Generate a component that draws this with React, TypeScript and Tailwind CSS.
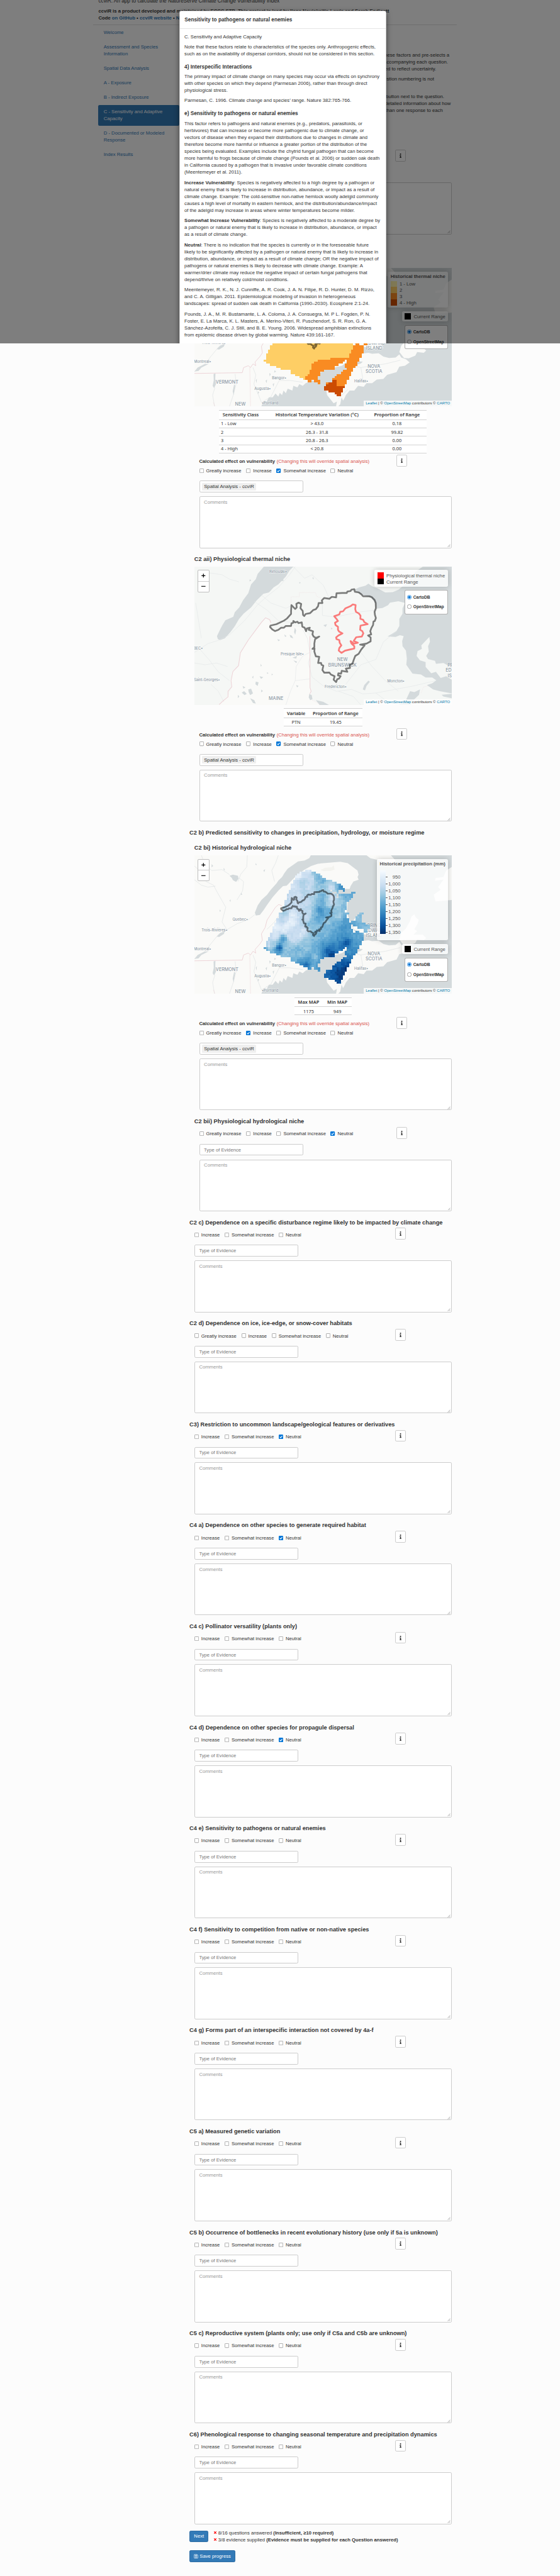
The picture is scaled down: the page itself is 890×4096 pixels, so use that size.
import type { ReactNode } from "react";
import { FaInfo, FaRegSave, FaTimes } from "react-icons/fa";

/* ---------- geometry helpers ---------- */

type Pt = [number, number];

function inside(x: number, y: number, poly: Pt[]): boolean {
  let hit = false;
  for (let i = 0, j = poly.length - 1; i < poly.length; j = i++) {
    const [xi, yi] = poly[i];
    const [xj, yj] = poly[j];
    if (yi > y !== yj > y && x < ((xj - xi) * (y - yi)) / (yj - yi) + xi) hit = !hit;
  }
  return hit;
}

function parse(s: string): Pt[] {
  return s.trim().split(/\s+/).map((p) => p.split(",").map(Number) as Pt);
}

function noise(a: number, b: number): number {
  const n = Math.sin(a * 12.9898 + b * 78.233) * 43758.5453;
  return n - Math.floor(n);
}

/* ---------- raster layers ---------- */

const GRID = parse(
  "360,42 413,42 413,60 450,60 450,78 485,78 485,96 519,96 519,113 555,113 555,131 608,131 608,149 645,149 645,167 680,167 680,184 697,184 697,202 714,202 714,237 732,237 732,255 770,255 770,237 803,237 803,255 785,255 785,290 767,290 767,308 750,308 750,325 732,325 732,400 714,400 714,413 750,413 750,430 732,430 732,465 750,465 750,500 767,500 767,553 785,553 785,590 803,590 803,570 840,570 840,590 873,590 873,660 855,660 855,695 838,695 838,730 820,730 820,765 803,765 803,783 785,783 785,817 767,817 767,853 750,853 750,888 732,888 732,925 714,925 714,960 697,960 697,995 678,995 678,1031 645,1031 645,1013 610,1013 610,995 573,995 573,978 537,978 537,960 520,960 520,942 555,942 555,908 592,908 592,872 627,872 627,853 645,853 645,836 680,836 680,820 697,820 697,802 732,802 732,783 714,783 714,750 732,750 732,715 714,715 714,730 697,730 697,748 660,748 660,765 627,765 627,783 610,783 610,802 537,802 537,820 485,820 485,853 470,853 470,888 500,888 500,908 485,908 485,925 468,925 468,908 432,908 432,888 413,888 413,908 378,908 378,888 343,888 343,872 308,872 308,853 273,853 273,836 237,836 237,802 150,802 150,783 114,783 114,765 60,765 60,748 24,748 24,730 6,730 6,713 24,713 24,660 42,660 42,625 60,625 60,590 78,590 78,536 96,536 96,500 114,500 114,465 132,465 132,413 168,413 168,365 183,365 183,308 200,308 200,255 219,255 219,220 237,220 237,167 255,167 255,131 273,131 273,96 291,96 291,78 308,78 308,60 360,60",
);
const ISLAND = parse(
  "838,413 873,413 873,430 855,430 855,500 891,500 891,517 927,517 927,553 909,553 909,590 873,590 873,553 820,553 820,535 785,535 785,517 767,517 767,487 803,487 803,450 820,450 820,430 838,430",
);
const HOLES: [number, number, number, number][] = [
  [573, 219, 608, 237], [608, 237, 645, 255], [627, 255, 660, 290], [660, 220, 697, 255], [697, 237, 732, 257],
];
const WARM = parse("985,560 965,584 942,622 930,649 850,649 770,660 745,676 735,714 720,731 700,760 700,900 1100,900 1100,560");
const HOT = parse("845,769 865,769 875,796 920,806 897,865 790,865 790,800 830,785");

const CELL_W = 18;
const CELL_H = 17.66;

const RAIN: [number, number, number][] = [
  [390, 50, 0.12], [310, 90, 0.04], [335, 140, 0.33], [260, 190, 0.18], [300, 250, 0.22], [360, 100, 0.24], [420, 120, 0.2],
  [400, 200, 0.24], [440, 80, 0.42], [460, 110, 0.48], [515, 145, 0.5], [540, 180, 0.38], [480, 190, 0.4], [590, 200, 0.2],
  [590, 160, 0.32], [640, 170, 0.45], [680, 185, 0.68], [700, 215, 0.62], [420, 240, 0.3], [350, 230, 0.32], [220, 320, 0.26],
  [280, 330, 0.22], [380, 330, 0.24], [520, 280, 0.5], [515, 330, 0.52], [490, 395, 0.64], [510, 430, 0.58], [470, 470, 0.56],
  [560, 400, 0.5], [450, 420, 0.45], [400, 400, 0.26], [380, 460, 0.24], [430, 500, 0.42], [400, 520, 0.44], [460, 550, 0.42],
  [590, 330, 0.24], [600, 290, 0.2], [560, 320, 0.36], [650, 330, 0.36], [700, 380, 0.44], [740, 290, 0.5], [650, 450, 0.36],
  [560, 500, 0.4], [620, 520, 0.5], [720, 490, 0.58], [700, 560, 0.64], [640, 580, 0.56], [560, 560, 0.46], [540, 610, 0.46],
  [190, 420, 0.36], [160, 480, 0.3], [250, 440, 0.12], [250, 500, 0.06], [200, 540, 0.1], [110, 540, 0.08], [180, 570, 0.12],
  [300, 560, 0.26], [100, 620, 0.14], [50, 700, 0.22], [15, 720, 0.58], [140, 722, 0.84], [120, 745, 0.62], [90, 755, 0.46],
  [175, 640, 0.6], [90, 690, 0.36], [60, 660, 0.28], [230, 620, 0.22], [320, 610, 0.18], [270, 650, 0.24], [350, 570, 0.16],
  [370, 660, 0.38], [200, 720, 0.38], [300, 740, 0.48], [250, 770, 0.42], [330, 780, 0.42], [180, 790, 0.38], [370, 720, 0.4],
  [380, 870, 0.76], [350, 880, 0.72], [400, 820, 0.58], [320, 850, 0.62], [270, 810, 0.46], [450, 800, 0.4], [430, 880, 0.5],
  [480, 900, 0.6], [470, 740, 0.5], [520, 710, 0.62], [560, 750, 0.82], [590, 780, 0.95], [520, 780, 0.66], [600, 720, 0.76],
  [640, 690, 0.66], [720, 675, 0.84], [690, 700, 0.8], [600, 650, 0.56], [450, 640, 0.44], [680, 640, 0.64], [780, 600, 0.55],
  [820, 640, 0.54], [800, 700, 0.6], [740, 750, 0.62], [800, 745, 0.68], [740, 810, 0.72], [680, 860, 0.84], [740, 860, 0.88],
  [720, 910, 1], [650, 930, 0.95], [680, 970, 0.96], [600, 940, 0.86], [570, 930, 0.78], [540, 965, 0.78], [660, 1020, 0.9],
  [610, 900, 0.84], [840, 450, 0.42], [860, 530, 0.46], [900, 560, 0.44], [750, 570, 0.58],
];

const BLUES = [
  [247, 251, 255], [222, 235, 247], [198, 219, 239], [158, 202, 225], [107, 174, 214], [66, 146, 198], [33, 113, 181], [8, 81, 156], [8, 48, 107],
];

function blue(v: number): string {
  const t = Math.min(0.999, Math.max(0, v)) * 8;
  const i = Math.floor(t);
  const f = t - i;
  const c = BLUES[i].map((a, k) => Math.round(a + (BLUES[i + 1][k] - a) * f));
  return `rgb(${c[0]},${c[1]},${c[2]})`;
}

function rain(x: number, y: number): number {
  let sum = 0;
  let weight = 0;
  for (const [px, py, v] of RAIN) {
    const d = (x - px) ** 2 + (y - py) ** 2 + 150;
    const w = 1 / (d * Math.sqrt(d));
    sum += w * v;
    weight += w;
  }
  return sum / weight;
}

function Raster({ kind }: { kind: "rain" | "heat" }) {
  const cells: ReactNode[] = [];
  for (let c = 0; c < 52; c++) {
    for (let r = 0; r < 57; r++) {
      const x = 6 + c * CELL_W;
      const y = 42 + r * CELL_H;
      const cx = x + CELL_W / 2;
      const cy = y + CELL_H / 2;
      if (!inside(cx, cy, GRID) && !inside(cx, cy, ISLAND)) continue;
      if (HOLES.some(([x0, y0, x1, y1]) => cx > x0 && cx < x1 && cy > y0 && cy < y1)) continue;
      const mx = cx * 0.6149 + 479.6;
      const my = cy * 0.6297 + 207.8;
      let fill: string;
      if (kind === "rain") fill = blue(rain(cx, cy) + (noise(c, r) - 0.5) * 0.07);
      else fill = inside(mx, my, HOT) ? "#cc4c02" : inside(mx, my, WARM) ? "#f98b22" : "#fece65";
      cells.push(<rect key={`${c}-${r}`} x={x} y={y} width={CELL_W} height={CELL_H} fill={fill} />);
    }
  }
  return (
    <g shapeRendering="crispEdges" transform="translate(479.6 207.8) scale(0.6149 0.6297)">
      {cells}
    </g>
  );
}

/* ---------- map drawings ---------- */

const RANGE =
  "965,222 968,236 988,240 1002,250 1012,262 1045,262 1058,267 1073,283 1079,300 1080,330 1073,350 1075,368 1080,385 1074,402 1067,405 1065,425 1056,442 1050,460 1055,478 1038,484 1052,495 1052,517 1030,530 996,536 1020,540 1003,562 988,588 970,600 961,625 955,645 940,650 942,668 920,672 928,690 898,684 895,700 880,698 878,710 892,714 884,728 874,732 868,748 855,735 860,715 840,705 832,694 805,695 795,680 800,655 790,650 788,640 772,640 778,605 760,602 752,575 753,558 742,560 752,550 752,530 756,505 778,490 760,498 748,490 742,478 745,460 722,452 728,440 712,444 708,460 700,440 688,434 685,410 668,414 662,406 650,410 640,402 640,412 630,415 628,430 600,430 590,440 575,440 560,452 542,459 528,450 516,436 518,428 550,420 590,400 606,388 628,362 628,345 630,312 650,334 658,325 656,305 668,298 682,305 678,330 690,345 692,368 698,374 706,362 730,357 746,340 760,335 772,318 775,300 795,300 792,285 804,272 832,276 845,265 868,268 870,245 900,243 925,243 928,235 945,232 950,224";
const NICHE =
  "957,308 972,312 970,335 974,350 990,360 998,372 997,390 1012,395 1018,408 1036,420 1016,424 998,428 996,452 1008,460 1013,472 1005,490 975,494 962,515 984,525 963,530 945,516 950,530 965,545 965,558 940,564 915,570 897,583 882,570 885,555 896,540 887,525 885,510 870,505 868,495 880,484 902,472 884,462 878,452 878,435 865,425 862,412 878,402 870,390 858,375 885,365 890,350 905,347 918,330 945,318";

type Label = [number, number, string, number, ("start" | "middle" | "end")?];

function Labels({ items, sy, top }: { items: Label[]; sy: number; top: number }) {
  return (
    <svg className="absolute inset-0 h-full w-full" viewBox="0 0 744 400" preserveAspectRatio="none">
      <g fill="#8f9ba6" stroke="#ffffff" strokeOpacity="0.7" strokeWidth="2" paintOrder="stroke" fontFamily="Inter, sans-serif" fontWeight="500">
        {items.map(([x, y, t, size, anchor]) => (
          <text key={t + x} x={(x - 113) / 1.8447} y={(y - top) / sy + size * 0.36} fontSize={size} textAnchor={anchor ?? "middle"}>
            {t}
          </text>
        ))}
      </g>
    </svg>
  );
}

const WIDE_LABELS: Label[] = [
  [357, 508, "Quebec▪", 10.5], [220, 566, "Trois-Rivières▪", 10.5], [156, 669, "Montreal▪", 10.5], [287, 780, "VERMONT", 13],
  [565, 755, "Bangor▪", 10.5], [476, 814, "Augusta▪", 10.5], [516, 892, "▪Portland", 10.5], [358, 898, "NEW", 13],
  [1070, 694, "NOVA", 13], [1070, 721, "SCOTIA", 13], [1002, 773, "Halifax▪", 10.5],
  [1078, 540, "PRINCE", 13], [1078, 567, "EDWARD", 13], [1071, 595, "ISLAND", 13],
];

function WideMap({ kind }: { kind: "rain" | "heat" }) {
  const land = "#fafaf8";
  const water = "#d4dadc";
  return (
    <>
      <svg className="absolute inset-0 h-full w-full" viewBox="113 157 1372 754" preserveAspectRatio="none">
        <rect x="113" y="157" width="1372" height="754" fill={land} />
        <path
          fill={water}
          d="M733 157 L725 172 L700 185 L665 190 L640 208 L610 230 L592 255 L580 275 L560 295 L550 310 L520 345 L500 372 L470 400 L450 430 L435 470 L440 485 L462 482 L482 455 L498 430 L530 385 L560 350 L585 325 L605 322 L635 290 L660 265 L700 235 L735 215 L770 203 L830 197 L890 192 L930 200 L950 215 L982 240 L988 262 L982 275 L988 290 L960 300 L945 325 L940 340 L915 340 L860 345 L835 350 L860 385 L900 395 L930 400 L925 470 L960 560 L1000 620 L960 640 L900 690 L800 715 L765 745 L770 775 L735 770 L725 778 L706 785 L690 800 L672 790 L662 808 L640 800 L635 825 L610 815 L600 840 L588 825 L580 850 L568 838 L560 858 L545 842 L530 862 L510 862 L498 885 L480 885 L470 911 L1485 911 L1485 157 Z"
        />
        <g fill={land}>
          <path d="M955 640 L985 640 L1000 625 L1040 620 L1060 625 L1095 622 L1120 640 L1150 648 L1185 645 L1205 628 L1215 645 L1240 655 L1260 672 L1235 690 L1205 695 L1190 725 L1140 740 L1120 762 L1085 765 L1060 785 L1030 785 L1015 805 L985 800 L965 825 L940 825 L920 850 L912 868 L905 880 L897 862 L890 900 L880 911 L868 911 L872 885 L855 895 L840 876 L820 850 L815 822 L850 832 L900 800 L945 725 L960 690 L1000 678 L1010 668 L975 665 Z" />
          <path d="M1205 615 L1215 580 L1240 555 L1262 515 L1270 490 L1285 478 L1292 495 L1308 508 L1302 530 L1285 560 L1300 570 L1280 590 L1330 590 L1348 608 L1335 620 L1300 615 L1290 635 L1255 650 L1230 648 Z" />
          <path d="M975 490 L1000 500 L1000 530 L1035 545 L1075 560 L1110 575 L1120 595 L1070 600 L1010 585 L960 560 L955 520 Z" />
          <path d="M1030 157 L1160 157 L1185 185 L1160 210 L1100 185 L1050 172 Z" />
          <path d="M1485 220 L1455 240 L1440 275 L1398 280 L1395 295 L1440 290 L1412 330 L1425 345 L1388 372 L1398 408 L1440 405 L1485 400 Z" />
        </g>
        <g fill={water}>
          <path d="M300 268 L318 262 L345 268 L348 285 L335 302 L318 292 L312 280 Z" />
          <path d="M215 735 L225 732 L224 760 L228 790 L218 812 L210 800 L216 770 Z" />
          <path d="M232 600 L250 580 L275 572 L270 585 L245 602 Z" />
          <path d="M113 722 L130 700 L165 682 L190 680 L150 700 L135 718 Z" />
          <path d="M325 790 L330 800 L322 850 L317 830 Z M530 790 L538 785 L534 805 Z M492 772 L500 765 L498 785 Z M512 730 L520 735 L514 748 Z M540 715 L548 722 L538 728 Z M440 770 L446 760 L444 785 Z M452 830 L458 836 L450 845 Z M270 225 L276 240 L268 235 Z M205 205 L213 215 L204 222 Z M150 240 L160 250 L152 252 Z M362 360 L368 372 L360 372 Z M300 402 L306 398 L305 412 Z M440 200 L446 210 L438 208 Z M480 240 L490 232 L486 248 Z M248 452 L254 460 L247 465 Z" />
        </g>
        <g fill="none" stroke="#d9dee0" strokeWidth="2">
          <path d="M435 480 L400 508 L340 530 L290 560 L240 590 L200 640 L170 680 L113 722" />
          <path d="M113 215 L150 250 L175 300 L215 320 L230 350 L280 440 L260 520 L285 560" />
          <path d="M395 157 L392 220 L360 260 L345 300 M560 157 L545 200 L525 240 L540 300" />
          <path d="M330 735 L335 790 L320 850 L300 911 M222 810 L210 850 L220 911 M500 560 L540 520 L560 490" />
          <path d="M113 290 L150 320 L185 330 L225 325 M150 157 L170 210 L205 240 L260 235 L300 262 M350 280 L375 300 L370 350 L340 400" />
          <path d="M425 700 L440 740 L430 790 L455 850 L470 890 M470 890 L520 860 L565 770 L620 770 L690 780" />
          <path d="M960 690 L1000 700 L1060 690 L1130 680 L1210 660 M1000 700 L1010 760 L990 780 M930 820 L880 870" />
        </g>
        <g fill="none" stroke="#eccfd4" strokeWidth="3">
          <path d="M113 732 L368 728 L375 700 L400 690 L412 700 L425 680 L440 690 L436 670 L462 640 L475 620 L470 585 L490 550 L500 510 L545 440 L562 425 L580 432" />
          <path strokeWidth="1.5" d="M408 700 L412 911 M214 890 L222 911" />
        </g>
        <path fill="#f3f3ef" d="M785 237 L810 225 L845 222 L855 212 L860 235 L840 242 L800 243 Z" />
      </svg>
      <Labels items={WIDE_LABELS} sy={1.885} top={157} />
      <svg className="absolute inset-0 h-full w-full" viewBox="113 157 1372 754" preserveAspectRatio="none">
        <Raster kind={kind} />
        <g transform="translate(315.98 241.55) scale(0.501 0.475)">
          <polygon points={RANGE} fill="none" stroke="#000" strokeOpacity="0.5" strokeWidth="2.7" strokeLinejoin="round" vectorEffect="non-scaling-stroke" />
        </g>
      </svg>
    </>
  );
}

const NEAR_LABELS: Label[] = [
  [559, 122, "Rimouski▪", 10.5], [133, 557, "BEC▪", 10.5], [634, 590, "Presque Isle▪", 10.5], [179, 735, "Saint-Georges▪", 10.2],
  [548, 840, "MAINE", 13], [866, 776, "Fredericton▪", 10.5], [1187, 741, "Moncton▪", 10.5],
  [902, 620, "NEW", 13], [902, 652, "BRUNSWICK", 13.4],
  [1462, 650, "PR", 13, "start"], [1452, 681, "ED", 13, "start"], [1463, 711, "IS", 13, "start"],
];

function NearMap() {
  const water = "#d4dadc";
  return (
    <>
      <svg className="absolute inset-0 h-full w-full" viewBox="113 94 1372 784" preserveAspectRatio="none">
        <rect x="113" y="94" width="1372" height="784" fill="#f5f7f5" />
        <path fill="#fafaf8" d="M490 385 L520 405 L518 440 L542 459 L600 432 L630 430 L690 440 L728 490 L730 780 L740 850 L800 878 L245 878 L290 830 L310 780 L305 740 L315 690 L348 650 L358 582 L400 510 L470 410 Z" />
        <g fill={water}>
          <path d="M483 94 L640 94 L620 115 L600 150 L560 195 L535 212 L510 240 L480 248 L445 285 L415 325 L375 360 L350 392 L328 432 L305 465 L275 500 L250 510 L238 505 L233 488 L250 450 L262 425 L278 398 L320 378 L328 352 L352 325 L372 285 L400 245 L415 195 L440 165 L450 135 Z" />
          <path d="M1330 94 L1295 120 L1240 190 L1200 225 L1170 238 L1130 240 L1085 215 L1060 205 L1040 190 L1025 202 L990 212 L965 225 L1000 250 L1055 270 L1078 300 L1085 332 L1115 328 L1145 312 L1155 298 L1200 290 L1235 300 L1222 330 L1222 360 L1205 390 L1205 430 L1190 458 L1165 475 L1142 490 L1185 492 L1208 482 L1228 488 L1220 515 L1222 545 L1240 570 L1245 615 L1242 650 L1262 680 L1275 700 L1320 705 L1345 722 L1380 722 L1402 738 L1380 755 L1352 765 L1385 790 L1420 800 L1485 812 L1485 94 Z" />
          <path d="M1262 800 L1285 805 L1315 790 L1310 820 L1280 850 L1265 878 L1200 878 L1240 850 Z M1430 820 L1485 815 L1485 840 L1440 830 Z" />
        </g>
        <path fill="#f5f7f5" d="M1365 492 L1368 520 L1358 545 L1362 575 L1348 600 L1358 618 L1395 628 L1400 645 L1440 640 L1485 665 L1485 735 L1455 715 L1425 725 L1400 690 L1375 698 L1345 662 L1345 635 L1315 625 L1297 600 L1302 572 L1325 560 L1322 540 Z" />
        <g fill={water}>
          <path d="M575 165 L585 160 L588 175 L568 175 Z M620 480 L632 485 L640 500 L625 495 Z M592 478 L604 488 L596 492 Z M648 440 L655 455 L650 480 L644 465 Z M555 505 L570 510 L560 516 Z M635 610 L660 600 L655 615 Z M640 625 L660 632 L655 640 Z M800 425 L820 420 L812 436 Z M840 440 L850 444 L842 450 Z" />
          <path d="M1040 740 L1048 746 L1030 770 L1022 795 L1010 790 L1018 765 Z M725 815 L738 822 L742 845 L730 850 L722 835 Z M760 850 L800 860 L830 878 L780 878 Z M365 808 L378 800 L392 815 L380 822 Z M440 745 L455 750 L450 770 L438 760 Z M400 790 L415 785 L425 812 L410 822 L402 805 Z M410 840 L432 850 L440 870 L425 866 Z M370 770 L385 778 L374 785 Z M460 715 L480 720 L468 730 Z M345 820 L352 830 L344 840 Z M470 790 L478 800 L468 806 Z M655 765 L668 770 L660 778 Z M500 692 L508 698 L500 702 Z M525 700 L532 706 L524 710 Z M420 720 L428 712 L426 728 Z M465 645 L472 655 L466 660 Z M672 180 L680 186 L672 190 Z M745 152 L750 165 L742 162 Z M408 165 L416 172 L406 178 Z M410 265 L418 270 L410 275 Z" />
        </g>
        <g fill="none" stroke="#e1e5e6" strokeWidth="2">
          <path d="M113 580 L150 555 L185 530 L240 512 L300 480 L380 400 L450 310 L500 262 L560 212 L620 140 L650 94" />
          <path d="M150 500 L135 400 L120 300 M150 140 L200 130 L260 140 L300 165 L350 180 M140 560 L190 620 L240 690 L300 740" />
          <path d="M600 878 L625 800 L650 740 L728 730 M650 740 L655 660 L690 600 L728 580 L715 500 L690 450" />
          <path d="M740 560 L720 640 L740 720 L800 770 L870 800 L950 790 L1010 815 L1080 810 L1180 790 L1280 770 L1400 740" />
          <path d="M920 760 L1000 650 L1080 620 L1120 520 L1190 460 M1000 580 L1060 660 L1130 740 L1200 800 M795 290 L795 370 L860 380 L1000 350 L1080 340" />
          <path d="M430 290 L500 340 L560 400 L628 410 M470 255 L520 300 L600 330 L640 310 M640 94 L700 160 L740 140 L800 200 L830 270" />
          <path d="M113 640 L170 650 L230 640 L290 660 M200 760 L240 800 L270 860 M880 800 L960 830 L1000 878 M1080 810 L1130 850 L1200 878" />
        </g>
        <g fill="none" stroke="#edd3d7" strokeWidth="3.5">
          <path d="M520 412 L514 394 L492 384 L470 410 L400 510 L358 582 L348 655 L318 688 L308 740 L312 775 L292 800 L292 832 L262 858 L245 876" />
          <path d="M728 488 L729 780 L735 800 L728 815" />
          <path strokeWidth="1.5" strokeDasharray="3 3" d="M628 308 L628 265 L672 265 L672 241 L758 241 L764 262 L800 278 M1320 810 L1335 775 L1360 770 M740 850 L790 878" />
        </g>
      </svg>
      <Labels items={NEAR_LABELS} sy={1.96} top={94} />
      <svg className="absolute inset-0 h-full w-full" viewBox="113 94 1372 784" preserveAspectRatio="none">
        <polygon points={RANGE} fill="none" stroke="#000" strokeOpacity="0.5" strokeWidth="2.7" strokeLinejoin="round" vectorEffect="non-scaling-stroke" />
        <polygon points={NICHE} fill="none" stroke="#f00" strokeOpacity="0.5" strokeWidth="2.7" strokeLinejoin="round" vectorEffect="non-scaling-stroke" />
      </svg>
    </>
  );
}

/* ---------- map chrome ---------- */

const PANEL = "rounded-[2.75px] bg-white/80 text-[#555] shadow-[0_0_8px_rgba(0,0,0,0.2)]";

function Radio({ on, label }: { on?: boolean; label: string }) {
  return (
    <div className="flex h-28 items-center gap-4 text-[6.6px] font-bold">
      <svg className="h-13 w-13 shrink-0" viewBox="0 0 13 13">
        <circle cx="6.5" cy="6.5" r="5.8" fill="#fff" stroke={on ? "#0075d7" : "#767676"} strokeWidth="1.2" />
        {on && <circle cx="6.5" cy="6.5" r="3.8" fill="#0075d7" />}
      </svg>
      <span className="whitespace-nowrap">{label}</span>
    </div>
  );
}

function LayerControl() {
  return (
    <div className="flex h-70 w-126 flex-col rounded-[2.75px] border border-black/30 bg-white pt-4 pl-6">
      <Radio on label="CartoDB" />
      <Radio label="OpenStreetMap" />
    </div>
  );
}

function CurrentRange() {
  return (
    <div className={`flex h-30 w-134 items-center gap-8 pl-8 text-[7.7px] ${PANEL}`}>
      <span className="h-18 w-18 bg-black" />
      <span className="whitespace-nowrap">Current Range</span>
    </div>
  );
}

function MapFrame({ zoom = true, children, controls }: { zoom?: boolean; children: ReactNode; controls: ReactNode }) {
  return (
    <div className="relative ml-14 h-400 w-744 overflow-hidden">
      {children}
      {zoom && (
        <div className="absolute top-10 left-10 flex h-64 w-34 flex-col rounded-[2.2px] border border-black/25 bg-white text-black">
          <span className="flex h-32 items-center justify-center border-b border-[#ccc]">
            <svg className="h-12 w-12" viewBox="0 0 12 12"><path d="M6 0.5V11.5M0.5 6H11.5" stroke="#000" strokeWidth="2.2" /></svg>
          </span>
          <span className="flex flex-1 items-center justify-center">
            <svg className="h-12 w-12" viewBox="0 0 12 12"><path d="M0 6H12" stroke="#000" strokeWidth="2" /></svg>
          </span>
        </div>
      )}
      <div className="absolute top-10 right-10 flex flex-col items-end gap-10">{controls}</div>
      <div className="absolute right-0 bottom-0 flex h-17 items-center bg-white/80 px-5 text-[6.06px] whitespace-pre text-[#333]">
        <span className="text-[#0078a8]">Leaflet</span> | © <span className="text-[#0078a8]">OpenStreetMap</span> contributors ©{" "}
        <span className="text-[#0078a8]">CARTO</span>
      </div>
    </div>
  );
}

/* ---------- form pieces ---------- */

const WIDTHS: Record<string, string> = {
  "Greatly increase": "w-136",
  Increase: "w-87.5",
  "Somewhat increase": "w-156.5",
  Neutral: "w-80",
};

function Choices({ four, picked }: { four?: boolean; picked?: string }) {
  const names = ["Increase", "Somewhat increase", "Neutral"];
  if (four) names.unshift("Greatly increase");
  return (
    <div className="flex h-20 items-center">
      {names.map((n) => (
        <label key={n} className={`flex items-center gap-7 ${WIDTHS[n]}`}>
          <svg className="h-13 w-13 shrink-0" viewBox="0 0 13 13">
            {n === picked ? (
              <>
                <rect width="13" height="13" rx="2.5" fill="#0075d7" />
                <path d="M3 6.8 L5.5 9.3 L10.2 3.8" fill="none" stroke="#fff" strokeWidth="1.9" />
              </>
            ) : (
              <rect x="0.7" y="0.7" width="11.6" height="11.6" rx="2" fill="#fff" stroke="#767676" strokeWidth="1.2" />
            )}
          </svg>
          <span className="whitespace-nowrap">{n}</span>
        </label>
      ))}
    </div>
  );
}

function InfoButton() {
  return (
    <button className="flex h-34 w-31 shrink-0 items-center justify-center rounded-[2.2px] border border-[#ccc] bg-white text-[#333]">
      <FaInfo className="h-13 w-13" />
    </button>
  );
}

function Comments() {
  return (
    <div className="relative h-150 rounded-[2.2px] border border-[#ccc] bg-white px-12 pt-5 leading-[11px] text-[#999]">
      Comments
      <svg className="absolute right-1 bottom-1 h-9 w-9" viewBox="0 0 9 9">
        <path d="M1 8.5L8.5 1M5 8.5L8.5 5" stroke="#666" strokeWidth="1" />
      </svg>
    </div>
  );
}

function Evidence({ tag }: { tag?: boolean }) {
  return (
    <div className="mb-11 flex h-34 w-300 items-center rounded-[2.2px] border border-[#ccc] bg-white">
      {tag ? (
        <span className="ml-7 flex h-22 w-155 items-center justify-center rounded-[1.6px] bg-[#efefef] whitespace-nowrap">Spatial Analysis - ccviR</span>
      ) : (
        <span className="ml-12 text-[#777]">Type of Evidence</span>
      )}
    </div>
  );
}

function Heading({ children, indent }: { children: ReactNode; indent?: boolean }) {
  return (
    <h4 className={`flex h-20 items-center text-[9.24px] font-bold whitespace-nowrap ${indent ? "ml-14" : ""}`}>{children}</h4>
  );
}

function Question({ title, nested, four, picked }: { title: string; nested?: boolean; four?: boolean; picked?: string }) {
  return (
    <section className="h-292">
      <Heading indent={nested}>{title}</Heading>
      <div className={nested ? "ml-28" : "ml-14"}>
        <div className={`mt-5 mb-15 flex h-34 justify-between ${nested ? "w-601" : "w-611"}`}>
          <div className="pt-10"><Choices four={four} picked={picked} /></div>
          <InfoButton />
        </div>
        <Evidence />
        <Comments />
      </div>
    </section>
  );
}

function Calculated({ picked }: { picked: string }) {
  return (
    <div className="ml-28 h-293">
      <div className="flex h-75 w-601 justify-between">
        <div className="pt-9">
          <div className="flex h-20 items-center gap-5 font-bold whitespace-nowrap">
            Calculated effect on vulnerability
            <span className="text-[7.6px] font-normal text-[#d9534f]">(Changing this will override spatial analysis)</span>
          </div>
          <div className="pt-7"><Choices four picked={picked} /></div>
        </div>
        <InfoButton />
      </div>
      <Evidence tag />
      <Comments />
    </div>
  );
}

const TABLE = "mx-auto bg-white font-[Noto_Sans,sans-serif] border-y border-[#d3d3d3]";

function SmallTable({ heads, cells, cols, width }: { heads: string[]; cells: string[]; cols: string; width: string }) {
  return (
    <div className={`h-52 text-center text-[7.4px] ${TABLE} ${width}`}>
      <div className={`grid h-27 items-center border-b border-[#d3d3d3] font-semibold ${cols}`}>
        {heads.map((h) => <span key={h} className="whitespace-nowrap">{h}</span>)}
      </div>
      <div className={`grid h-24 items-center ${cols}`}>
        {cells.map((h) => <span key={h}>{h}</span>)}
      </div>
    </div>
  );
}

/* ---------- modal ---------- */

function Lines({ rows, lead }: { rows: string[]; lead?: string }) {
  return (
    <p className="mb-10">
      {rows.map((r, i) => (
        <span key={r} className="block h-20 leading-[11px] whitespace-nowrap">
          {i === 0 && lead && <b>{lead}</b>}
          {r}
        </span>
      ))}
    </p>
  );
}

function Modal() {
  return (
    <div className="absolute top-0 left-0 h-993 w-full overflow-hidden bg-black/50">
      <div className="mt-31 ml-517.5 h-980 w-599 rounded-t-[3.3px] border border-black/20 bg-white text-[7.7px] shadow-[0_3px_8px_rgba(0,0,0,0.5)]">
        <div className="flex h-50 items-center border-b border-[#e5e5e5] px-14 text-[8.25px] font-bold">Sensitivity to pathogens or natural enemies</div>
        <div className="px-13.5 pt-13">
          <p className="h-29 leading-[11px]">C. Sensitivity and Adaptive Capacity</p>
          <Lines rows={["Note that these factors relate to characteristics of the species only. Anthropogenic effects,", "such as on the availability of dispersal corridors, should not be considered in this section."]} />
          <h5 className="mt-18 mb-8 flex h-20 items-center text-[8.25px] font-bold">4) Interspecific Interactions</h5>
          <Lines rows={["The primary impact of climate change on many species may occur via effects on synchrony", "with other species on which they depend (Parmesan 2006), rather than through direct", "physiological stress."]} />
          <Lines rows={["Parmesan, C. 1996. Climate change and species’ range. Nature 382:765-766."]} />
          <h5 className="mt-18 mb-9 flex h-20 items-center text-[8.25px] font-bold">e) Sensitivity to pathogens or natural enemies</h5>
          <Lines
            rows={[
              "This factor refers to pathogens and natural enemies (e.g., predators, parasitoids, or",
              "herbivores) that can increase or become more pathogenic due to climate change, or",
              "vectors of disease when they expand their distributions due to changes in climate and",
              "therefore become more harmful or influence a greater portion of the distribution of the",
              "species being evaluated. Examples include the chytrid fungal pathogen that can become",
              "more harmful to frogs because of climate change (Pounds et al. 2006) or sudden oak death",
              "in California caused by a pathogen that is invasive under favorable climate conditions",
              "(Meentemeyer et al. 2011).",
            ]}
          />
          <Lines
            lead="Increase Vulnerability"
            rows={[
              ": Species is negatively affected to a high degree by a pathogen or",
              "natural enemy that is likely to increase in distribution, abundance, or impact as a result of",
              "climate change. Example: The cold-sensitive non-native hemlock woolly adelgid commonly",
              "causes a high level of mortality in eastern hemlock, and the distribution/abundance/impact",
              "of the adelgid may increase in areas where winter temperatures become milder.",
            ]}
          />
          <Lines
            lead="Somewhat Increase Vulnerability"
            rows={[
              ": Species is negatively affected to a moderate degree by",
              "a pathogen or natural enemy that is likely to increase in distribution, abundance, or impact",
              "as a result of climate change.",
            ]}
          />
          <Lines
            lead="Neutral"
            rows={[
              ": There is no indication that the species is currently or in the foreseeable future",
              "likely to be significantly affected by a pathogen or natural enemy that is likely to increase in",
              "distribution, abundance, or impact as a result of climate change; OR the negative impact of",
              "pathogens or natural enemies is likely to decrease with climate change. Example: A",
              "warmer/drier climate may reduce the negative impact of certain fungal pathogens that",
              "depend/thrive on relatively cold/moist conditions.",
            ]}
          />
          <Lines rows={["Meentemeyer, R. K., N. J. Cunniffe, A. R. Cook, J. A. N. Filipe, R. D. Hunter, D. M. Rizzo,", "and C. A. Gilligan. 2011. Epidemiological modeling of invasion in heterogeneous", "landscapes: spread of sudden oak death in California (1990–2030). Ecosphere 2:1-24."]} />
          <Lines rows={["Pounds, J. A., M. R. Bustamante, L. A. Coloma, J. A. Consuegra, M. P L. Fogden, P. N.", "Foster, E. La Marca, K. L. Masters, A. Merino-Viteri, R. Puschendorf, S. R. Ron, G. A.", "Sánchez-Azofeifa, C. J. Still, and B. E. Young. 2006. Widespread amphibian extinctions", "from epidemic disease driven by global warming. Nature 439:161-167."]} />
        </div>
      </div>
    </div>
  );
}

/* ---------- page ---------- */

const NAV: { lines: string[]; active?: boolean }[] = [
  { lines: ["Welcome"] },
  { lines: ["Assessment and Species", "Information"] },
  { lines: ["Spatial Data Analysis"] },
  { lines: ["A - Exposure"] },
  { lines: ["B - Indirect Exposure"] },
  { lines: ["C - Sensitivity and Adaptive", "Capacity"], active: true },
  { lines: ["D - Documented or Modeled", "Response"] },
  { lines: ["Index Results"] },
];

const HEAT_KEY: [string, string][] = [["1 - Low", "bg-[#fef0a8]"], ["2", "bg-[#fece65]"], ["3", "bg-[#f98b22]"], ["4 - High", "bg-[#cc4c02]"]];
const HEAT_ROWS = [["1 - Low", "> 43.0", "0.18"], ["2", "26.3 - 31.8", "99.82"], ["3", "20.8 - 26.3", "0.00"], ["4 - High", "< 20.8", "0.00"]];
const RAIN_KEY = ["950", "1,000", "1,050", "1,100", "1,150", "1,200", "1,250", "1,300", "1,350"];

export default function App() {
  return (
    <div className="relative h-[4096px] w-full overflow-hidden bg-[#fcfcfc] font-[Liberation_Sans,Arial,sans-serif] text-[7.7px] leading-[11px] text-[#333] [--spacing:0.55px]">
      <div className="ml-269.5 w-1050">
        <header className="flex h-73 flex-col overflow-hidden border-b border-[#ddd] pl-15 whitespace-nowrap">
          <p className="-mt-7 mb-9 h-20 shrink-0 text-[8.25px]">ccviR: An app to calculate the NatureServe Climate Change Vulnerability Index</p>
          <div className="font-bold">
            <p className="h-20">ccviR is a product developed and maintained by ECCC STB. This project is lead by Ilona Naujokaitis-Lewis and Sarah Endicott</p>
            <p className="h-20">
              Code <span className="text-[#337ab7]">on GitHub</span> • <span className="text-[#337ab7]">ccviR website</span> • <span className="text-[#337ab7]">NatureServe</span>
            </p>
          </div>
        </header>

        <div className="flex">
          <nav className="flex w-263 shrink-0 flex-col gap-2 px-15">
            {NAV.map((n) => (
              <a key={n.lines[0]} className={`flex flex-col rounded-[2.2px] px-15 py-10 whitespace-nowrap ${n.active ? "bg-[#337ab7] text-white" : "text-[#337ab7]"}`}>
                {n.lines.map((l) => <span key={l} className="h-20">{l}</span>)}
              </a>
            ))}
          </nav>

          <main className="w-787.5 shrink-0 px-15">
            <div className="flex h-360 flex-col pt-76 whitespace-nowrap">
              <p className="h-20 w-751 text-right">these factors and pre-selects a</p>
              <p className="h-20 w-747 text-right">accompanying each question.</p>
              <p className="mb-10 h-20 w-713 text-right">used to reflect uncertainty.</p>
              <p className="mb-30 h-20 w-707 text-right">question numbering is not</p>
              <p className="h-20 w-736 text-right">button next to the question.</p>
              <p className="h-20 w-755 text-right">detailed information about how</p>
              <p className="h-20 w-732 text-right">than one response to each</p>
            </div>
            <div className="ml-14 h-342">
              <div className="mb-61 flex w-611 justify-end"><InfoButton /></div>
              <Comments />
            </div>

            <MapFrame
              zoom={false}
              controls={
                <>
                  <div className={`h-105 w-175 px-8 pt-5 text-[7.7px] ${PANEL}`}>
                    <p className="h-22 font-bold whitespace-nowrap">Historical thermal niche</p>
                    {HEAT_KEY.map(([t, c]) => (
                      <div key={t} className="flex h-18 items-center gap-8">
                        <span className={`h-18 w-18 ${c}`} />
                        <span>{t}</span>
                      </div>
                    ))}
                  </div>
                  <CurrentRange />
                  <LayerControl />
                </>
              }
            >
              <WideMap kind="heat" />
            </MapFrame>
            <div className="ml-14 h-140 pt-10">
              <div className={`w-600 text-[7.4px] ${TABLE}`}>
                <div className="grid h-27 grid-cols-[137.7fr_290fr_172fr] items-center border-b border-[#d3d3d3] text-center font-semibold whitespace-nowrap">
                  <span className="pl-10 text-left">Sensitivity Class</span>
                  <span>Historical Temperature Variation (°C)</span>
                  <span>Proportion of Range</span>
                </div>
                {HEAT_ROWS.map((r, i) => (
                  <div key={r[0]} className={`grid grid-cols-[137.7fr_290fr_172fr] items-center text-center ${i < 3 ? "h-24.25 border-b border-[#d3d3d3]" : "h-23"}`}>
                    <span className="pl-5 text-left">{r[0]}</span>
                    <span>{r[1]}</span>
                    <span>{r[2]}</span>
                  </div>
                ))}
              </div>
            </div>
            <Calculated picked="Somewhat increase" />

            <div className="mb-10 h-20"><Heading indent>C2 aii) Physiological thermal niche</Heading></div>
            <MapFrame
              controls={
                <>
                  <div className={`flex h-48 w-213 gap-8 px-8 pt-6 text-[7.7px] ${PANEL}`}>
                    <div className="flex flex-col">
                      <span className="h-18 w-18 bg-[#f00]" />
                      <span className="h-18 w-18 bg-black" />
                    </div>
                    <div className="flex flex-col whitespace-nowrap">
                      <span className="h-18">Physiological thermal niche</span>
                      <span className="h-18">Current Range</span>
                    </div>
                  </div>
                  <LayerControl />
                </>
              }
            >
              <NearMap />
            </MapFrame>
            <div className="ml-14 h-67 pt-10">
              <SmallTable width="w-228" cols="grid-cols-[73fr_155fr]" heads={["Variable", "Proportion of Range"]} cells={["PTN", "19.45"]} />
            </div>
            <Calculated picked="Somewhat increase" />

            <Heading>C2 b) Predicted sensitivity to changes in precipitation, hydrology, or moisture regime</Heading>
            <div className="mt-24 mb-11 h-20"><Heading indent>C2 bi) Historical hydrological niche</Heading></div>
            <MapFrame
              controls={
                <>
                  <div className={`h-236 w-206 px-8 pt-5 text-[7.7px] ${PANEL}`}>
                    <p className="h-29 font-bold whitespace-nowrap">Historical precipitation (mm)</p>
                    <div className="flex">
                      <span className="h-184 w-18 bg-[linear-gradient(#f7fbff,#deebf7,#c6dbef,#9ecae1,#6baed6,#4292c6,#2171b5,#08519c,#08306b)]" />
                      <div className="flex w-42 flex-col pt-8">
                        {RAIN_KEY.map((k) => (
                          <div key={k} className="flex h-20 items-center justify-between">
                            <span className="mt-2 h-px w-4 bg-[#555]" />
                            <span>{k}</span>
                          </div>
                        ))}
                      </div>
                    </div>
                  </div>
                  <CurrentRange />
                  <LayerControl />
                </>
              }
            >
              <WideMap kind="rain" />
            </MapFrame>
            <div className="ml-14 h-67 pt-10">
              <SmallTable width="w-166" cols="grid-cols-2" heads={["Max MAP", "Min MAP"]} cells={["1175", "949"]} />
            </div>
            <Calculated picked="Increase" />

            <Question nested four picked="Neutral" title="C2 bii) Physiological hydrological niche" />
            <Question title="C2 c) Dependence on a specific disturbance regime likely to be impacted by climate change" />
            <Question four title="C2 d) Dependence on ice, ice-edge, or snow-cover habitats" />
            <Question picked="Neutral" title="C3) Restriction to uncommon landscape/geological features or derivatives" />
            <Question picked="Neutral" title="C4 a) Dependence on other species to generate required habitat" />
            <Question title="C4 c) Pollinator versatility (plants only)" />
            <Question picked="Neutral" title="C4 d) Dependence on other species for propagule dispersal" />
            <Question title="C4 e) Sensitivity to pathogens or natural enemies" />
            <Question title="C4 f) Sensitivity to competition from native or non-native species" />
            <Question title="C4 g) Forms part of an interspecific interaction not covered by 4a-f" />
            <Question title="C5 a) Measured genetic variation" />
            <Question title="C5 b) Occurrence of bottlenecks in recent evolutionary history (use only if 5a is unknown)" />
            <Question title="C5 c) Reproductive system (plants only; use only if C5a and C5b are unknown)" />
            <Question title="C6) Phenological response to changing seasonal temperature and precipitation dynamics" />

            <div className="-mt-5 flex gap-14">
              <button className="flex h-34 w-55 items-center justify-center rounded-[2.2px] border border-[#2e6da4] bg-[#337ab7] text-white">Next</button>
              <div className="-mt-3 flex flex-col whitespace-nowrap">
                <div className="flex h-20 items-center gap-3">
                  <FaTimes className="h-11 w-11 text-[#f00]" />
                  <span>8/16 questions answered <b>(Insufficient, ≥10 required)</b></span>
                </div>
                <div className="flex h-20 items-center gap-3">
                  <FaTimes className="h-11 w-11 text-[#f00]" />
                  <span>3/8 evidence supplied <b>(Evidence must be supplied for each Question answered)</b></span>
                </div>
              </div>
            </div>
            <button className="mt-20 flex h-34 w-132 items-center justify-center gap-4 rounded-[2.2px] border border-[#2e6da4] bg-[#337ab7] text-white">
              <FaRegSave className="h-13 w-13" />
              Save progress
            </button>
          </main>
        </div>
      </div>
      <Modal />
    </div>
  );
}
